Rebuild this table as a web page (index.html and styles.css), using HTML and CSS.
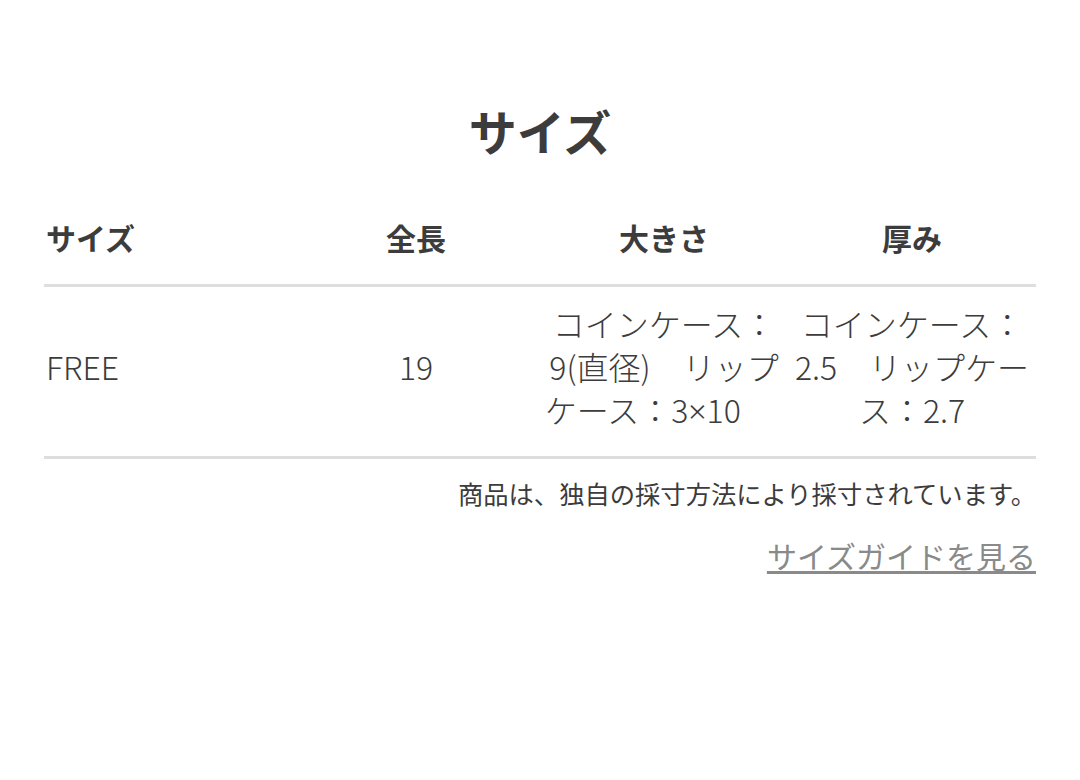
FILE: index.html
```html
<!DOCTYPE html>
<html lang="ja">
<head>
<meta charset="utf-8">
<link rel="stylesheet" href="styles.css">
</head>
<body>
<section class="size">
  <h2 class="size-title">サイズ</h2>
  <table class="size-table">
    <thead>
      <tr>
        <th class="col-left">サイズ</th>
        <th>全長</th>
        <th>大きさ</th>
        <th>厚み</th>
      </tr>
    </thead>
    <tbody>
      <tr>
        <td class="col-left">FREE</td>
        <td>19</td>
        <td>コインケース：9(直径)　リップケース：3<span class="latin">×</span>10&nbsp;&nbsp;&nbsp;&nbsp;&nbsp;&nbsp;</td>
        <td>コインケース：2.5　リップケース：2.7</td>
      </tr>
    </tbody>
  </table>
  <p class="size-note">商品は、独自の採寸方法により採寸されています。</p>
  <div class="size-guide"><a href="#" class="size-link">サイズガイドを見る</a></div>
</section>
</body>
</html>
```
FILE: styles.css
```css
html, body {
  margin: 0;
  padding: 0;
  background: #fff;
}
body {
  font-family: "Noto Sans CJK JP", "Noto Sans", sans-serif;
  color: #3c3c3c;
}
.size {
  padding: 94px 44px 0;
}
.size-title {
  margin: 0;
  text-align: center;
  font-size: 48px;
  line-height: 72px;
  font-weight: 700;
  color: #3c3c3c;
}
.size-table {
  width: 100%;
  margin-top: 27px;
  border-collapse: collapse;
  table-layout: fixed;
}
.size-table th {
  font-size: 30px;
  font-weight: 700;
  line-height: 43px;
  padding: 23px 4px 25px;
  text-align: center;
  border-bottom: 3px solid #dedede;
}
.size-table td {
  font-size: 32px;
  font-weight: 300;
  line-height: 43px;
  padding: 15px 2px 25px;
  text-align: center;
  border-bottom: 3px solid #dedede;
}
.size-table .col-left {
  text-align: left;
  padding-left: 2px;
}
.latin {
  font-family: "Noto Sans", sans-serif;
  font-weight: 300;
  line-height: 1;
}
.size-note {
  margin: 16px 0 0;
  text-align: right;
  font-size: 25.3px;
  line-height: 36px;
}
.size-guide {
  margin-top: 22px;
  text-align: right;
}
.size-link {
  font-size: 30px;
  line-height: 44px;
  color: #8a8a8a;
  text-decoration: underline;
  text-underline-offset: 3px;
}
```
